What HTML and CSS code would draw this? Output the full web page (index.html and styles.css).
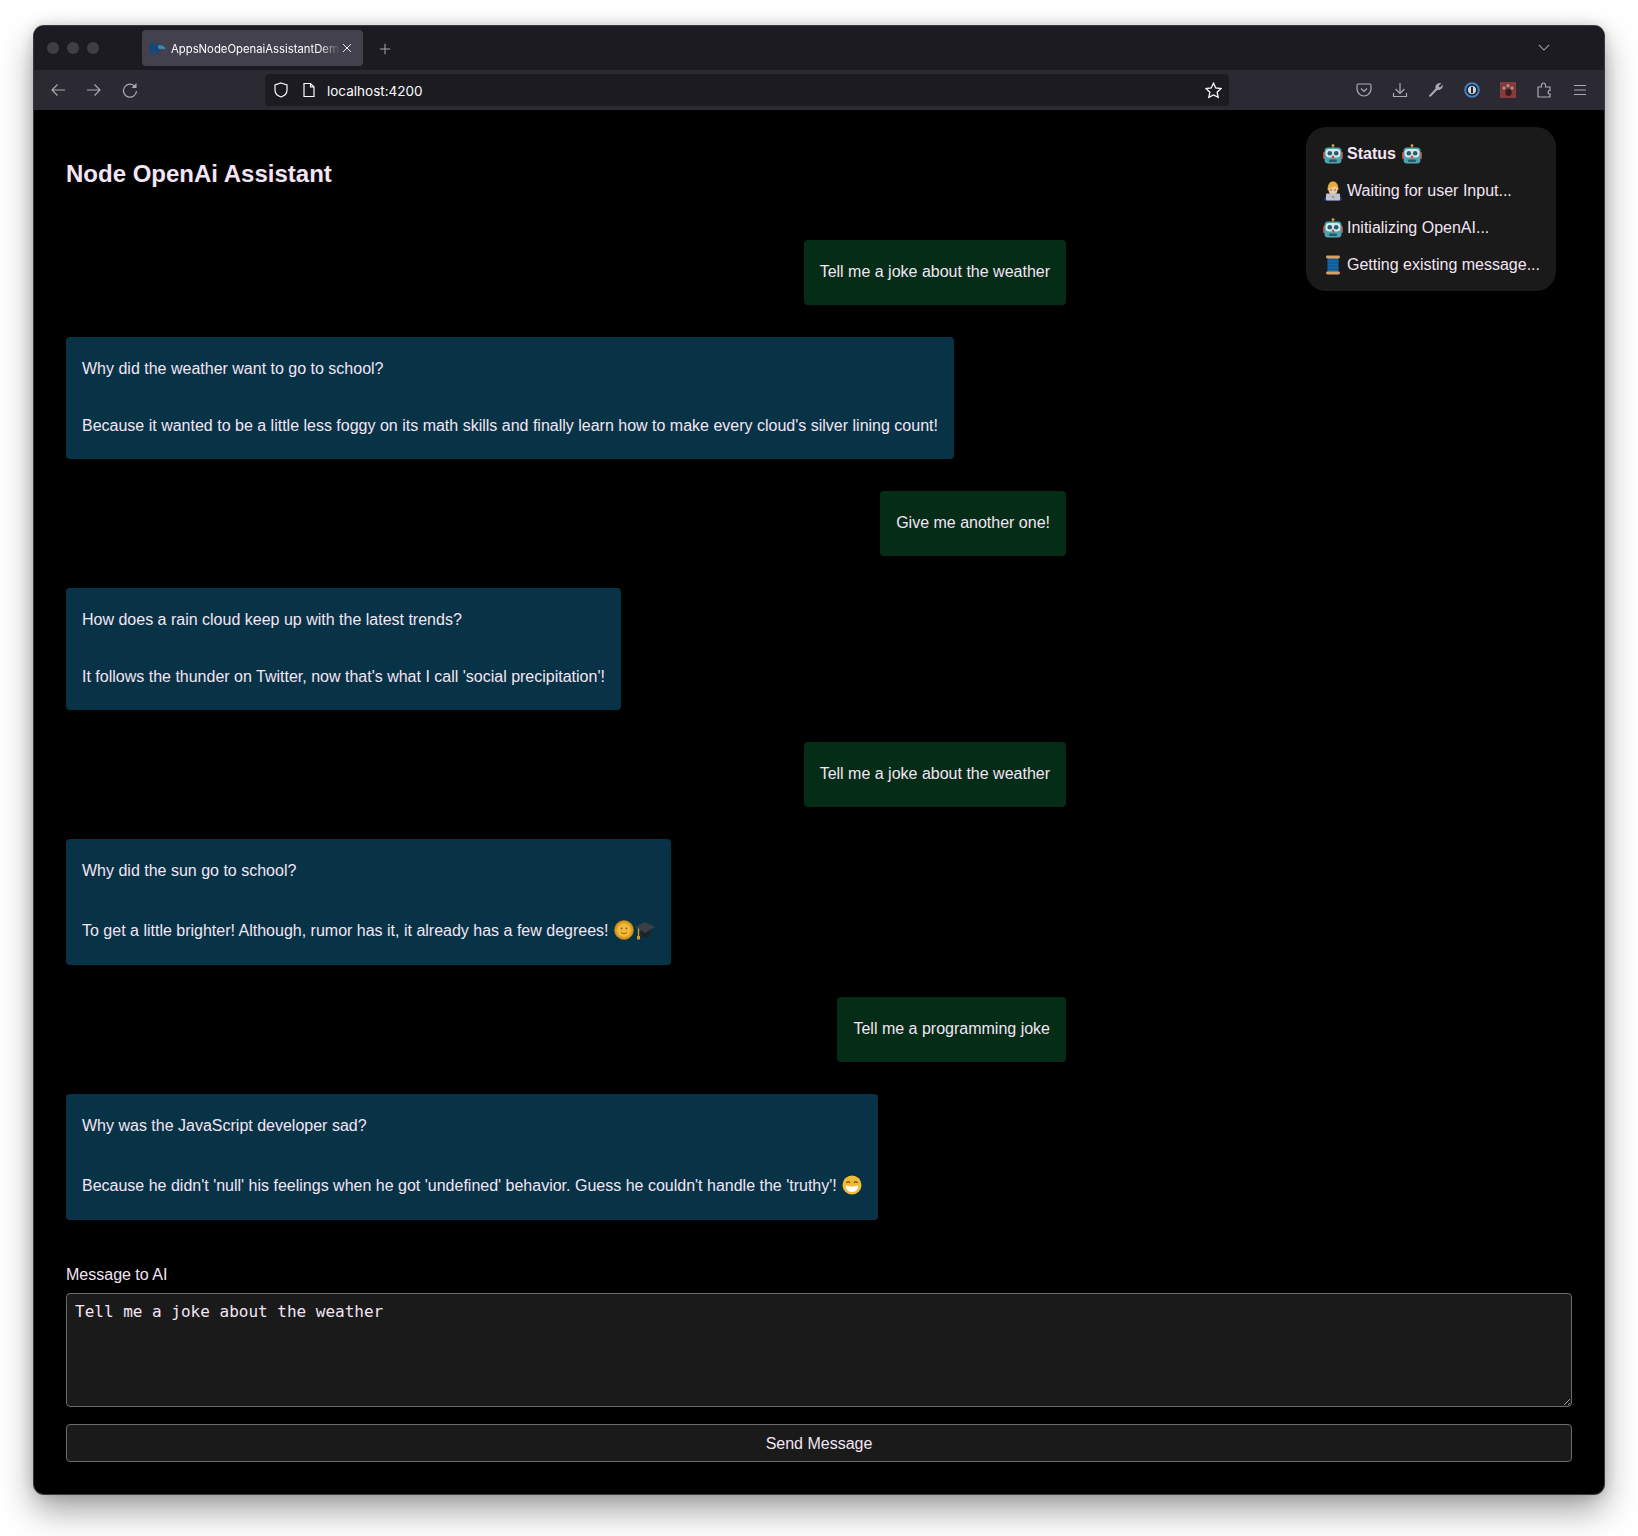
FILE: index.html
```html
<!DOCTYPE html>
<html lang="en">
<head>
    <meta charset="UTF-8">
    <meta name="viewport" content="width=device-width, initial-scale=1.0">
    <title>AppsNodeOpenaiAssistantDemo</title>
    <link rel="stylesheet" href="styles.css">
</head>
<body>
    <svg class="sprites" width="0" height="0">
        <symbol id="robot" viewBox="0 0 20 20">
            <circle cx="10" cy="1.6" r="1.4" fill="#e8a33a"/>
            <rect x="9.400" y="2.500" width="1.200" height="1.500" fill="#b9862d"/>
            <rect x="0" y="8" width="3" height="7" rx="1" fill="#c2453a"/>
            <rect x="17" y="8" width="3" height="7" rx="1" fill="#c2453a"/>
            <rect x="1.500" y="3.500" width="17" height="16" rx="3.500" fill="#4fa3ae"/>
            <rect x="2.500" y="5" width="15" height="8.500" rx="4" fill="#cfeaee"/>
            <circle cx="6.800" cy="9.200" r="2.300" fill="#2c5b6a"/>
            <circle cx="13.200" cy="9.200" r="2.300" fill="#2c5b6a"/>
            <circle cx="10" cy="13" r="1.400" fill="#d8483b"/>
            <rect x="6" y="15.500" width="8" height="2.400" rx="1" fill="#245d69"/>
        </symbol>
        <symbol id="technologist" viewBox="0 0 20 20">
            <path d="M4.500 9C4.500 3 7 .5 10 .5s5.500 2.500 5.500 8.500z" fill="#e3ab3a"/>
            <path d="M5.500 7c2.500 0 5-.8 6.500-2 1 1 2.500 2 2.500 2v2c0 3-2 4.500-4.500 4.500S5.500 12 5.500 9z" fill="#f4c99b"/>
            <circle cx="8" cy="9" r=".7" fill="#4a3220"/>
            <circle cx="12" cy="9" r=".7" fill="#4a3220"/>
            <path d="M1 19.500c0-4 3-6.500 9-6.500s9 2.500 9 6.500z" fill="#2536a8"/>
            <rect x="3" y="12.500" width="14" height="7" rx="1" fill="#bfc2c8"/>
            <circle cx="10" cy="16" r=".8" fill="#55585f"/>
        </symbol>
        <symbol id="spool" viewBox="0 0 20 20">
            <rect x="4.500" y="2" width="11" height="16" fill="#1769a8"/>
            <path d="M4.500 5h11M4.500 8h11M4.500 11h11M4.500 14h11" stroke="#0e4f84" stroke-width=".8"/>
            <rect x="3" y="0.500" width="14" height="3" rx="1.400" fill="#d9a066"/>
            <rect x="3" y="16.500" width="14" height="3" rx="1.400" fill="#d9a066"/>
        </symbol>
        <symbol id="sun" viewBox="0 0 20 20">
            <circle cx="10" cy="10" r="9.500" fill="#d99a1c" stroke="#b77f12" stroke-width="1" stroke-dasharray="1 1"/>
            <circle cx="10" cy="10" r="7" fill="#f0b93a"/>
            <circle cx="7.500" cy="8.500" r=".9" fill="#8a5a12"/>
            <circle cx="12.500" cy="8.500" r=".9" fill="#8a5a12"/>
            <path d="M7 12.500c2 1.400 4 1.400 6 0" stroke="#8a5a12" stroke-width=".9" fill="none"/>
        </symbol>
        <symbol id="cap" viewBox="0 0 20 20">
            <path d="M6 10v6c2 2 7 2 9 0v-6z" fill="#1e2226"/>
            <path d="M0 7l10-5 10 5-10 6z" fill="#3a3f45"/>
            <path d="M3.500 8.500V16" stroke="#d39a2c" stroke-width="1.400"/>
            <path d="M2 16h3v3.500H2z" fill="#d39a2c"/>
        </symbol>
        <symbol id="grin" viewBox="0 0 20 20">
            <circle cx="10" cy="10" r="9.500" fill="#f0bb36"/>
            <path d="M4.500 8c1-1.800 2.500-1.800 3.500 0M12 8c1-1.800 2.500-1.800 3.500 0" stroke="#6b4710" stroke-width="1.200" fill="none"/>
            <path d="M3.500 10.500c4 1.200 9 1.200 13 0-.3 4.500-3.500 6.500-6.500 6.500s-6.200-2-6.500-6.500z" fill="#fff"/>
        </symbol>
    </svg>

    <div class="window">
        <div class="tabstrip">
            <div class="lights"><span></span><span></span><span></span></div>
            <div class="tab">
                <svg class="favicon" viewBox="0 0 16 11">
                    <path d="M0 11V0h3l3.500 5.500V0H9v11H6.500L3 5.500V11z" fill="#0e4a82"/>
                    <path d="M8 2.500c3-1 6 0 8 3-2 1-3 1-4 0-1 1-3 1-4-1z" fill="#3d89b5"/>
                </svg>
                <span class="tab-title">AppsNodeOpenaiAssistantDemo</span>
                <svg class="tab-close" viewBox="0 0 10 10"><path d="M1 1l8 8M9 1l-8 8"/></svg>
            </div>
            <svg class="newtab" viewBox="0 0 14 14"><path d="M7 1v12M1 7h12"/></svg>
            <svg class="chevron" viewBox="0 0 14 8"><path d="M1 1l6 6 6-6"/></svg>
        </div>

        <div class="toolbar">
            <div class="nav-buttons">
                <svg class="icon" viewBox="0 0 16 16"><path d="M15 8H2M7.500 2.500L2 8l5.500 5.500"/></svg>
                <svg class="icon" viewBox="0 0 16 16"><path d="M1 8h13M8.500 2.500L14 8l-5.500 5.500"/></svg>
                <svg class="icon" viewBox="0 0 16 16"><path d="M13 4.500A6.500 6.500 0 1 0 14.500 9"/><path class="solid" d="M14.500 1v5h-5z"/></svg>
            </div>
            <div class="urlbar">
                <svg class="url-icon" viewBox="0 0 16 16"><path d="M8 1l6 2v5c0 3.500-3 6-6 7-3-1-6-3.500-6-7V3z"/></svg>
                <svg class="url-icon" viewBox="0 0 16 16"><path d="M3 1.500h6.500L13 5v9.500H3zM9.500 1.500V5H13"/></svg>
                <span class="url-text">localhost:4200</span>
                <svg class="url-star" viewBox="0 0 16 16"><path d="M8 1l2.100 4.600 5 .6-3.700 3.400 1 4.900L8 12.100 3.600 14.500l1-4.900L.9 6.200l5-.6z"/></svg>
            </div>
            <div class="tool-buttons">
                <svg class="icon" viewBox="0 0 16 16"><path d="M2.500 2h11A1.500 1.500 0 0 1 15 3.500V7c0 4-3.500 7-7 7s-7-3-7-7V3.500A1.500 1.500 0 0 1 2.500 2z"/><path d="M5 6.500L8 9.500l3-3"/></svg>
                <svg class="icon" viewBox="0 0 16 16"><path d="M8 1v10M3.500 7L8 11.500 12.500 7M1.500 11v3.500h13V11"/></svg>
                <svg class="icon" viewBox="0 0 16 16"><path class="solid" d="M1 13.500l6.500-7c-.5-2.500 1-5 4-5.500.7 0 1.300 0 1.800.2L10.500 4l1.500 1.500 2.800-2.700c.5 3-2 5.700-5.500 5.200l-6.500 6.500c-1 .7-2.500-.5-1.800-1z"/></svg>
                <svg class="icon" viewBox="0 0 16 16">
                    <circle class="onepass-ring" cx="8" cy="8" r="6.800"/>
                    <circle class="onepass-core" cx="8" cy="8" r="4.200"/>
                    <rect class="onepass-bar" x="7" y="4.800" width="2" height="6.400"/>
                </svg>
                <svg class="icon paw" viewBox="0 0 16 16">
                    <rect class="paw-bg" width="16" height="16"/>
                    <circle class="paw-toe" cx="4" cy="6" r="2.200"/>
                    <circle class="paw-toe" cx="8" cy="3.800" r="2.200"/>
                    <circle class="paw-toe" cx="12" cy="6" r="2.200"/>
                    <ellipse class="paw-pad" cx="8.500" cy="10.500" rx="3.200" ry="3.400"/>
                </svg>
                <svg class="icon" viewBox="0 0 16 16"><path d="M2 5h3.500C5 2 6.500 1 7.500 1s2.500 1 2 4H14v3.500c-2.500-.5-2.500 4 0 3.500v3H2z"/></svg>
                <svg class="icon" viewBox="0 0 16 16"><path d="M2 3.500h12M2 8h12M2 12.500h12"/></svg>
            </div>
        </div>

        <main class="content">
            <aside class="status">
                <div class="status-line status-title"><svg class="emoji"><use href="#robot"/></svg><strong>Status</strong><svg class="emoji"><use href="#robot"/></svg></div>
                <div class="status-line"><svg class="emoji"><use href="#technologist"/></svg>Waiting for user Input...</div>
                <div class="status-line"><svg class="emoji"><use href="#robot"/></svg>Initializing OpenAI...</div>
                <div class="status-line"><svg class="emoji"><use href="#spool"/></svg>Getting existing message...</div>
            </aside>

            <h1>Node OpenAi Assistant</h1>

            <section class="messages">
                <div class="bubble user"><p>Tell me a joke about the weather</p></div>
                <div class="bubble assistant">
                    <p>Why did the weather want to go to school?</p>
                    <p>Because it wanted to be a little less foggy on its math skills and finally learn how to make every cloud's silver lining count!</p>
                </div>
                <div class="bubble user"><p>Give me another one!</p></div>
                <div class="bubble assistant">
                    <p>How does a rain cloud keep up with the latest trends?</p>
                    <p>It follows the thunder on Twitter, now that's what I call 'social precipitation'!</p>
                </div>
                <div class="bubble user"><p>Tell me a joke about the weather</p></div>
                <div class="bubble assistant tall">
                    <p>Why did the sun go to school?</p>
                    <p>To get a little brighter! Although, rumor has it, it already has a few degrees! <svg class="emoji inline"><use href="#sun"/></svg><svg class="emoji inline"><use href="#cap"/></svg></p>
                </div>
                <div class="bubble user"><p>Tell me a programming joke</p></div>
                <div class="bubble assistant tall">
                    <p>Why was the JavaScript developer sad?</p>
                    <p>Because he didn't 'null' his feelings when he got 'undefined' behavior. Guess he couldn't handle the 'truthy'! <svg class="emoji inline"><use href="#grin"/></svg></p>
                </div>
            </section>

            <form class="composer">
                <label class="composer-label" for="message">Message to AI</label>
                <textarea id="message" class="composer-input">Tell me a joke about the weather</textarea>
                <button type="button" class="composer-send">Send Message</button>
            </form>
        </main>
    </div>
</body>
</html>
```

FILE: styles.css
```css
html, body {
    margin: 0;
    height: 100%;
}

body {
    background-color: #ffffff;
    padding: 26px 34px 42px;
    box-sizing: border-box;
    overflow: hidden;
    font-family: "Liberation Sans", Arial, sans-serif;
    font-size: 16px;
    color: #f3e5f5;
}

.sprites {
    position: absolute;
}

.window {
    height: 100%;
    display: flex;
    flex-direction: column;
    background-color: #000000;
    border-radius: 10px;
    overflow: hidden;
    box-shadow: 0 0 0 1px #3a3a3d, 0 16px 34px rgba(0, 0, 0, 0.38), 0 0 14px rgba(0, 0, 0, 0.18);
}

/* browser chrome */
.tabstrip {
    height: 44px;
    flex: none;
    display: flex;
    align-items: center;
    padding-left: 13px;
    background-color: #1c1b22;
}

.lights {
    display: flex;
    gap: 8px;
}

.lights span {
    width: 12px;
    height: 12px;
    border-radius: 50%;
    background-color: #3e3e43;
}

.tab {
    width: 221px;
    height: 36px;
    margin-left: 43px;
    padding: 0 8px;
    box-sizing: border-box;
    display: flex;
    align-items: center;
    border-radius: 4px;
    background-color: #42414d;
    color: #fbfbfe;
    font-family: Inter, sans-serif;
    font-size: 11.3px;
}

.favicon {
    width: 16px;
    height: 11px;
    flex: none;
    margin-right: 5px;
}

.tab-title {
    flex: 1;
    margin-top: 2px;
    overflow: hidden;
    white-space: nowrap;
    -webkit-mask-image: linear-gradient(to right, #000 88%, transparent);
    mask-image: linear-gradient(to right, #000 88%, transparent);
}

.tab-close {
    width: 10px;
    height: 10px;
    flex: none;
    margin-left: 2px;
    margin-right: 3px;
    fill: none;
    stroke: #e8e8ec;
    stroke-width: 1;
}

.newtab {
    width: 12px;
    height: 12px;
    margin-left: 16px;
    margin-top: 2px;
    fill: none;
    stroke: #a5a5ab;
    stroke-width: 1.2;
}

.chevron {
    width: 12px;
    height: 7px;
    margin-left: auto;
    margin-right: 54px;
    margin-bottom: 2px;
    fill: none;
    stroke: #a5a5ab;
    stroke-width: 1.2;
}

.toolbar {
    height: 40px;
    flex: none;
    display: flex;
    align-items: center;
    background-color: #2b2a33;
}

.nav-buttons {
    display: flex;
    gap: 20px;
    width: 231px;
    padding-left: 16px;
    box-sizing: border-box;
}

.icon {
    width: 16px;
    height: 16px;
    flex: none;
    fill: none;
    stroke: #a9a9af;
    stroke-width: 1.2;
}

.icon .solid {
    fill: #a9a9af;
    stroke: none;
}

.urlbar {
    width: 964px;
    height: 32px;
    display: flex;
    align-items: center;
    padding: 0 7px 0 8px;
    box-sizing: border-box;
    border-radius: 4px;
    background-color: #1c1b22;
    color: #fbfbfe;
    font-family: Inter, sans-serif;
    font-size: 13.5px;
}

.url-icon {
    width: 16px;
    height: 16px;
    flex: none;
    margin-right: 12px;
    fill: none;
    stroke: #fbfbfe;
    stroke-width: 1.2;
}

.url-text {
    margin-left: -2px;
    margin-top: 2px;
}

.url-star {
    width: 17px;
    height: 17px;
    margin-left: auto;
    fill: none;
    stroke: #fbfbfe;
    stroke-width: 1.2;
}

.tool-buttons {
    display: flex;
    gap: 20px;
    margin-left: 127px;
}

.onepass-ring {
    fill: #1a1a20;
    stroke: #3f82c8;
    stroke-width: 2;
}

.onepass-core {
    fill: #c7d3e0;
    stroke: none;
}

.onepass-bar {
    fill: #22272e;
    stroke: none;
}

.paw-bg {
    fill: #8a3a3a;
    stroke: none;
}

.paw-toe {
    fill: #b58a8a;
    stroke: #4a2020;
    stroke-width: 0.6;
}

.paw-pad {
    fill: #3a1a1a;
    stroke: none;
}

/* page */
.content {
    position: relative;
    flex: 1;
    padding: 48px 32px 32px;
    display: flex;
    flex-direction: column;
}

h1 {
    margin: 0 0 50px;
    font-size: 24px;
    line-height: 32px;
    font-weight: bold;
}

.status {
    position: absolute;
    top: 17px;
    right: 48px;
    width: 250px;
    padding: 8px 16px 8px 17px;
    box-sizing: border-box;
    border-radius: 20px;
    background-color: #1a1a1a;
    white-space: nowrap;
}

.status-line {
    height: 37px;
    display: flex;
    align-items: center;
    gap: 4px;
}

.status-title strong {
    margin-right: 2px;
}

.emoji {
    width: 20px;
    height: 20px;
    flex: none;
}

.emoji.inline {
    margin-left: 1px;
    vertical-align: -4px;
}

.messages {
    width: 1000px;
    display: flex;
    flex-direction: column;
    gap: 32px;
}

.bubble {
    width: fit-content;
    padding: 15px 16px 17px;
    box-sizing: border-box;
    border-radius: 4px;
}

.bubble p {
    margin: 0;
    line-height: 33px;
}

.bubble p + p {
    margin-top: 24px;
}

.bubble.tall p {
    line-height: 34px;
}

.bubble.tall p + p {
    margin-top: 26px;
}

.bubble.user {
    align-self: flex-end;
    background-color: #052c16;
}

.bubble.assistant {
    background-color: #083346;
}

.composer {
    display: flex;
    flex-direction: column;
    margin-top: 45px;
}

.composer-label {
    line-height: 19px;
    margin-bottom: 9px;
}

.composer-input {
    height: 114px;
    padding: 9px 8px 8px;
    box-sizing: border-box;
    border: 1px solid #6b6b6b;
    border-radius: 4px;
    background-color: #1a1a1a;
    color: #f3e5f5;
    font-family: "DejaVu Sans Mono", monospace;
    font-size: 16px;
    line-height: 18px;
}

.composer-send {
    height: 38px;
    margin-top: 17px;
    padding-top: 3px;
    border: 1px solid #6b6b6b;
    border-radius: 4px;
    background-color: #1a1a1a;
    color: #f3e5f5;
    font-family: "Liberation Sans", Arial, sans-serif;
    font-size: 16px;
}
```
